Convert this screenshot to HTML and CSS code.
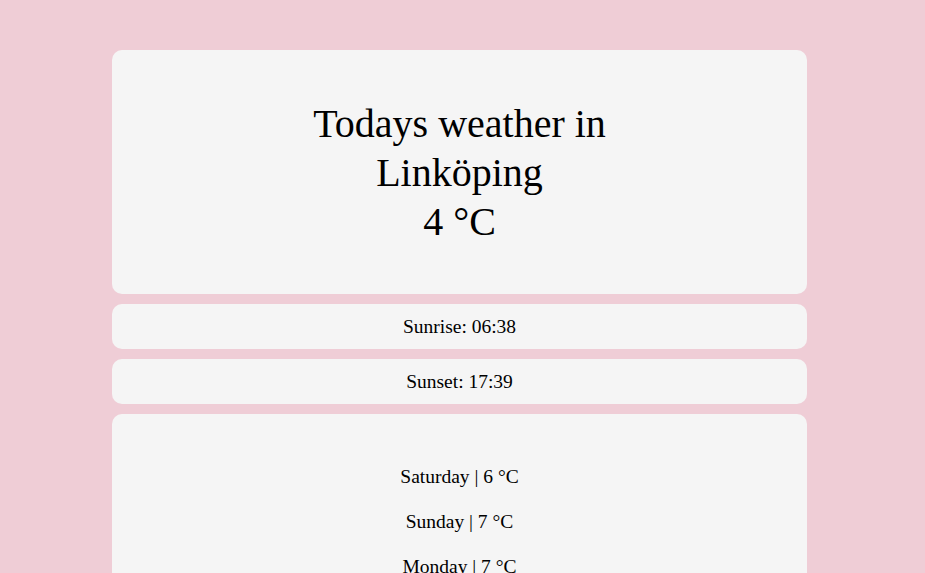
FILE: index.html
```html
<!DOCTYPE html>
<html lang="en">
<head>
<meta charset="utf-8">
<title>Weather</title>
<link rel="stylesheet" href="styles.css">
</head>
<body>
<main class="page">
  <section class="card hero">
    <h1 class="title">Todays weather in<br>Linköping<br>4 °C</h1>
  </section>
  <section class="card row"><p>Sunrise: 06:38</p></section>
  <section class="card row"><p>Sunset: 17:39</p></section>
  <section class="card forecast">
    <p>Saturday | 6 °C</p>
    <p>Sunday | 7 °C</p>
    <p>Monday | 7 °C</p>
    <p>Tuesday | 6 °C</p>
    <p>Wednesday | 5 °C</p>
  </section>
</main>
</body>
</html>
```
FILE: styles.css
```css
html, body {
  margin: 0;
  padding: 0;
  background: #efcdd6;
}
body {
  font-family: "Liberation Serif", "DejaVu Serif", serif;
  color: #000;
}
.page {
  width: 695px;
  margin: 50px 0 0 112px;
  display: flex;
  flex-direction: column;
  gap: 10px;
  padding-bottom: 40px;
}
.card {
  background: #f5f5f5;
  border-radius: 10px;
  text-align: center;
}
.hero {
  height: 244px;
  display: flex;
  align-items: center;
  justify-content: center;
}
.title {
  margin: 0;
  font-size: 40px;
  font-weight: normal;
  line-height: 49px;
}
.row {
  height: 45px;
  display: flex;
  align-items: center;
  justify-content: center;
}
.row p {
  margin: 0;
  font-size: 19.5px;
  line-height: 24px;
}
.forecast {
  padding: 31px 0 20px;
}
.forecast p {
  margin: 18px 0;
  font-size: 19.5px;
  line-height: 27px;
}
```
